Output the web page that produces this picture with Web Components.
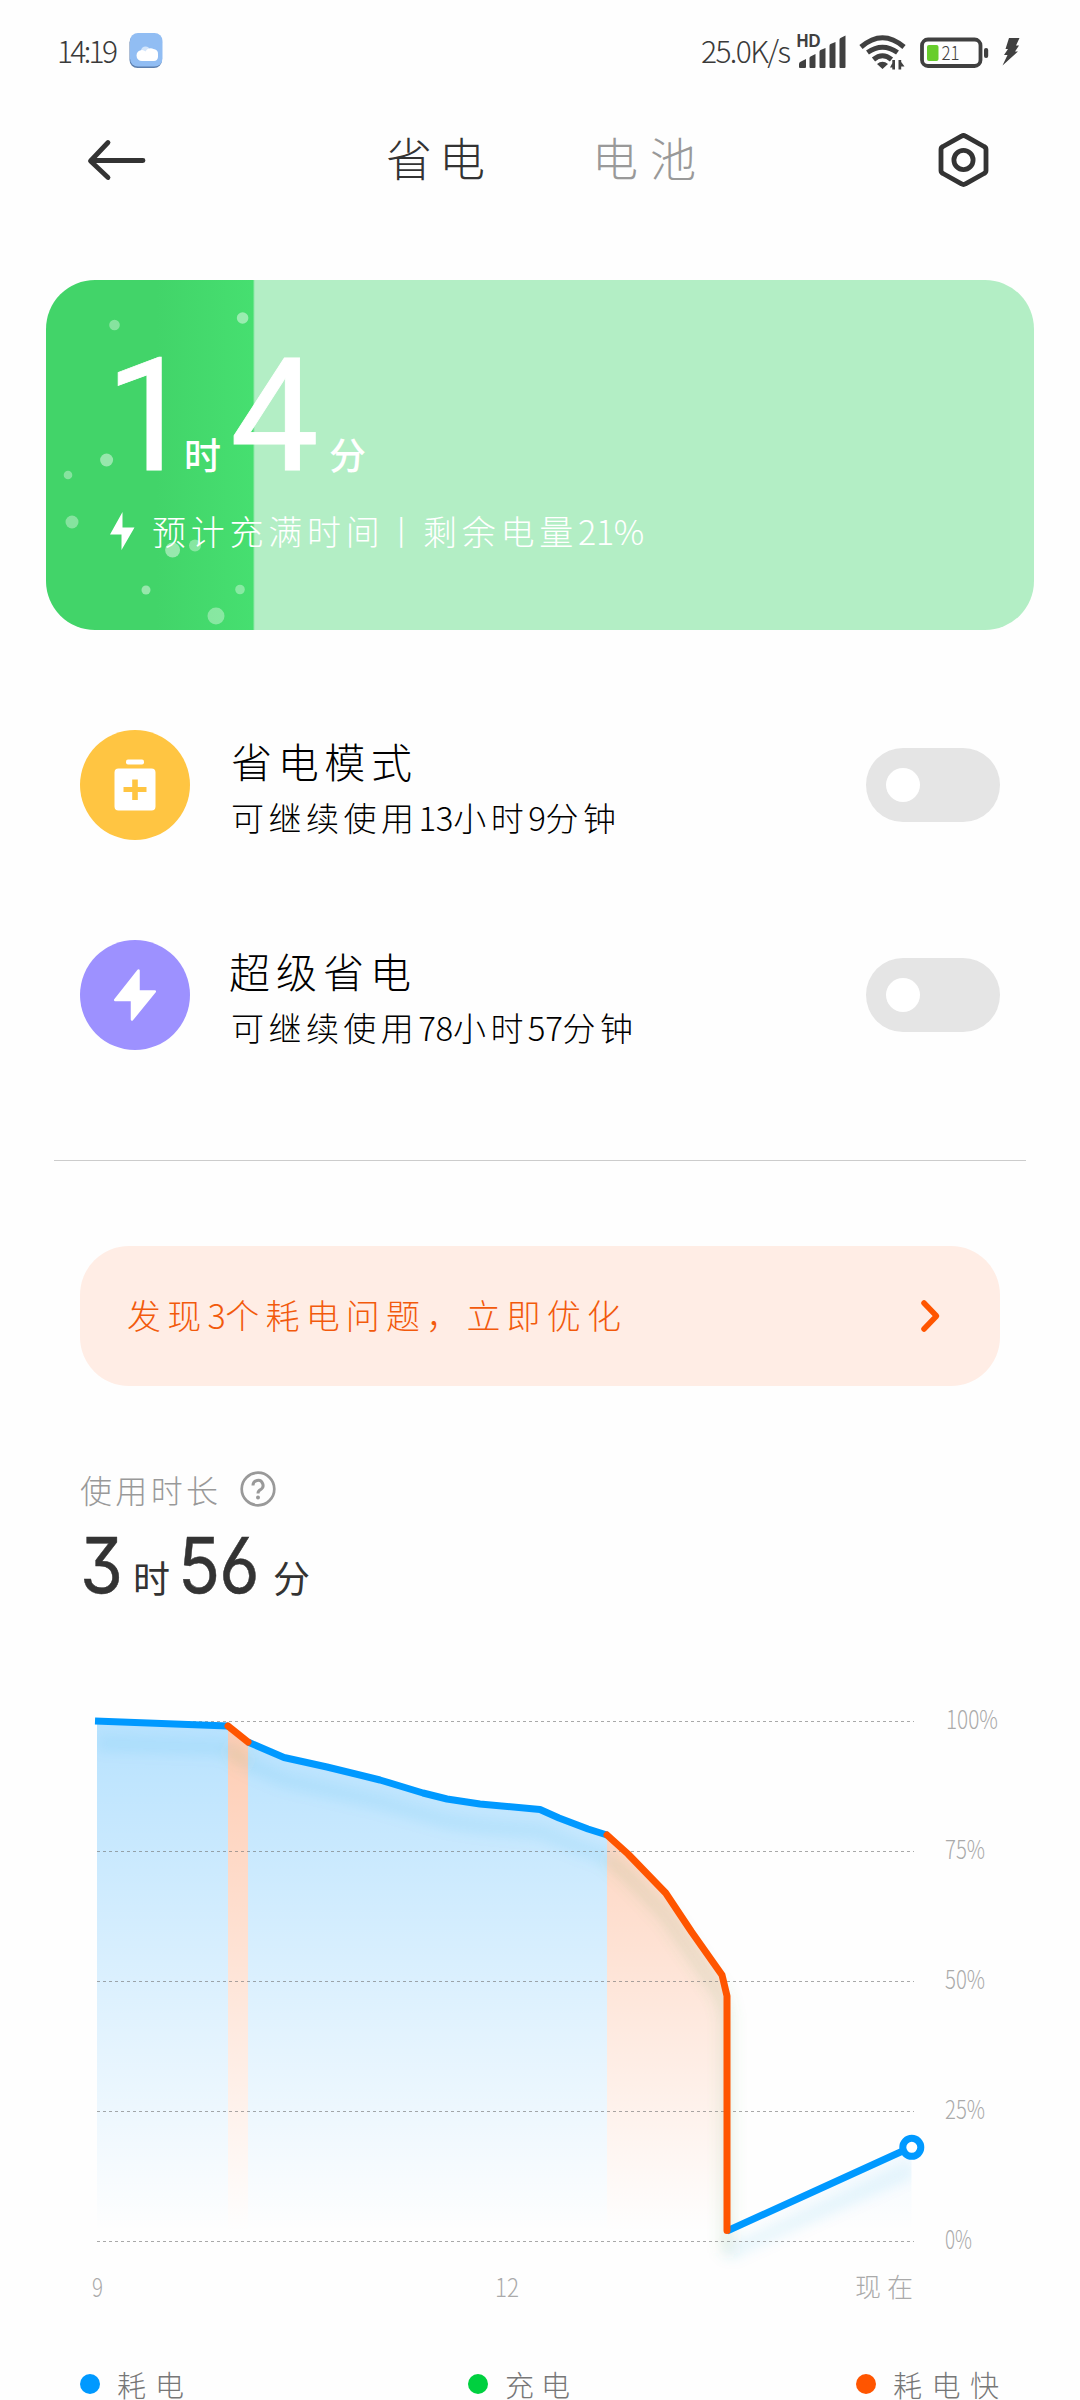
<!DOCTYPE html>
<html lang="zh-CN">
<head>
<meta charset="utf-8">
<title>省电与电池</title>
<style>
html,body{margin:0;padding:0;background:#fefefe}
body{width:1080px;height:2400px;overflow:hidden;font-family:"Noto Sans CJK SC",sans-serif;font-weight:300}
</style>
</head>
<body>
<battery-page></battery-page>
<script>
function define(name, html, after) {
  const t = document.createElement('template');
  t.innerHTML = html;
  customElements.define(name, class extends HTMLElement {
    connectedCallback() {
      if (this.shadowRoot) return;
      this.attachShadow({ mode: 'open' }).appendChild(t.content.cloneNode(true));
      if (after) after.call(this, this.shadowRoot);
    }
  });
}

// Single-line text whose tracking is adjusted so it spans the requested width.
// In mixed text only the ideographs are tracked; digits stay tight.
define('fit-text', `<style>:host{display:inline-block;white-space:nowrap;line-height:1.2}span{display:inline-block}</style><span><slot></slot></span>`, function (root) {
  const w = +this.getAttribute('w'), s = root.querySelector('span'), text = this.textContent.trim();
  const wide = text.replace(/[\x00-\x7f]/g, '').length;
  const mixed = wide > 0 && wide < text.length;
  if (mixed) this.innerHTML = text.replace(/[\x00-\x7f]+/g, m => '<span style="letter-spacing:-.3px">' + m + '</span>');
  const nat = s.getBoundingClientRect().width;
  const endsWide = text.charCodeAt(text.length - 1) > 127;
  const n = mixed ? (endsWide ? wide - 1 : wide) : text.length - 1;
  const ls = (w - nat) / Math.max(1, n);
  s.style.letterSpacing = ls + 'px';
  if (!mixed || endsWide) s.style.marginRight = -ls + 'px';
  this.style.width = w + 'px';
});

define('status-bar', `<style>
:host{display:flex;align-items:center;height:102px;padding:0 60px 0 57px;box-sizing:border-box;color:#3a3a3a}
fit-text{font-size:30px;position:relative;top:-1px}
.time{margin-right:11px}.grow{flex:1}.speed{margin-right:6px}
svg{display:block;flex:none}
</style>
<fit-text class="time" w="61">14:19</fit-text>
<svg width="34" height="36" viewBox="0 0 34 36"><rect x=".5" y="1.5" width="32.5" height="33.5" rx="8" fill="#5c7fae"/><rect x="1" y="0" width="32.5" height="33.5" rx="8" fill="#91bdf3"/><circle cx="16.500" cy="18" r="4.600" fill="#d3e5fb"/><path d="M13 28a5.500 5.500 0 0 1 0-11q2 0 3.500 1.500a6 6 0 0 1 8-2.500 4.600 4.600 0 0 1 4.500 5v3q-.5 4-4 4z" fill="#fff"/></svg>
<span class="grow"></span>
<fit-text class="speed" w="90">25.0K/s</fit-text>
<svg width="51" height="36" viewBox="0 0 51 36" fill="#404040"><text x="-.5" y="14" font-family="Liberation Sans" font-weight="700" font-size="17.500" textLength="24" lengthAdjust="spacingAndGlyphs">HD</text><path d="M2 34v-3q0-2 2-2.500l5-2.500v8q0 1-1 1H3q-1 0-1-1zM12.500 34V25q0-1 1-1.500l5-2.500v13q0 1-1 1h-4q-1 0-1-1zM22.500 34V19q0-1.500 1-2l5-2v19q0 1-1 1h-4q-1 0-1-1zM32.500 34V13q0-1.500 1-2l5-2v25q0 1-1 1h-4q-1 0-1-1zM42.500 34V7q0-1.500 1-2l5-2.500v31.500q0 1-1 1h-4q-1 0-1-1z"/></svg>
<svg style="margin-left:11px" width="48" height="38" viewBox="0 0 48 38"><g fill="none" stroke="#404040" stroke-width="5"><path d="M2 15Q23.500-3.500 45 15M8.500 20.500Q23.500 10 38.500 20.500M14.500 27.500Q23.500 20 32.500 27.500"/></g><path d="M18 32q5.500-4.500 11 0l-5.500 5zM35 28v7.500h-4zM33.300 28h2.700v9.500h-2.700zM39.500 28h2.700v9.500h-2.700zM41.500 29l4 5.500h-4z" fill="#404040"/></svg>
<svg style="margin-left:13px;margin-top:3px" width="70" height="32" viewBox="0 0 70 32"><rect x="2" y="2.500" width="58.500" height="26.500" rx="6" fill="none" stroke="#404040" stroke-width="3.800"/><rect x="7" y="8" width="11.500" height="16" rx="2" fill="#67cd2c"/><rect x="64" y="11" width="4.200" height="10" rx="2" fill="#404040"/><text x="21.500" y="23" font-size="19" fill="#404040" textLength="18" lengthAdjust="spacingAndGlyphs">21</text></svg>
<svg style="margin-left:11px;margin-top:2px" width="19" height="30" viewBox="0 0 19 30"><path d="M8 1h10.500l-3.500 7.500h3l-4 6h3L1.500 28.500l5-10.500H3L7 12H4.500z" fill="#404040"/></svg>`);

define('tab-header', `<style>
:host{display:flex;align-items:center;height:116px;padding-left:87px;color:#333}
fit-text{font-size:46px;position:relative;top:-3px}
.off{color:#999}
svg{display:block}
</style>
<svg width="60" height="44" viewBox="0 0 60 44" fill="none" stroke="#333" stroke-width="4.800" stroke-linecap="round" stroke-linejoin="round"><path d="M21 5.500L3.500 24 21 40.500M4 23.500h52" transform="translate(0 -1)"/></svg>
<fit-text style="margin-left:239px" w="99">省电</fit-text>
<fit-text style="margin-left:107px" class="off" w="104">电池</fit-text>
<svg style="margin-left:242px" width="52" height="56" viewBox="0 0 52 56" fill="none" stroke="#333" stroke-width="4.800" stroke-linejoin="round"><path d="M23.500 4.200q2-1.300 4 0L46 14.500q2 1 2 3v21q0 2-2 3L27.500 51.800q-2 1.300-4 0L5 41.500q-2-1-2-3v-21q0-2 2-3z"/><circle cx="25.500" cy="28" r="9.600"/></svg>`);

define('charge-card', `<style>
:host{display:block;position:relative;height:350px;margin:62px 46px 0;border-radius:49px;overflow:hidden;background:linear-gradient(90deg,#42d469 0,#42d469 110px,#46df70 207px,#8fe8a9 208px,#b3eec5 209px);color:#fff}
.bubbles{position:absolute;inset:0}
.body{position:relative;padding:56px 0 0 64px;box-sizing:border-box}
.big{display:flex;align-items:baseline;height:160px;line-height:160px;font-weight:500}
.n{font:400 158px/160px Roboto,sans-serif;display:block;-webkit-text-stroke:.8px #fff}
.u{font-size:37px;font-weight:500;display:block}
.sub{display:flex;align-items:center;height:50px;font-size:34px;margin-top:10px}
</style>
<svg class="bubbles" width="988" height="350" viewBox="46 280 988 350" fill="#fff"><g fill-opacity=".36"><circle cx="114.500" cy="325" r="5.300"/><circle cx="68" cy="475" r="4.300"/><circle cx="72" cy="522" r="6.500"/><circle cx="216" cy="616" r="8.500"/><circle cx="240" cy="589.500" r="4.800"/><circle cx="195" cy="545.500" r="6"/></g><g fill-opacity=".45"><circle cx="242.600" cy="318" r="5.800"/><circle cx="106.600" cy="460" r="6.500"/><circle cx="172.600" cy="550" r="7.500"/><circle cx="146" cy="590" r="4.500"/></g></svg>
<div class="body">
<div class="big"><span class="n" style="width:74px;text-indent:-5px;letter-spacing:-18px">1</span><span class="u" style="width:46px">时</span><span class="n" style="width:99px;letter-spacing:-4px">4</span><span class="u">分</span></div>
<div class="sub"><svg width="25" height="40" viewBox="0 0 25 40" fill="#fff"><path d="M12.500 1v15.500H24.500L11.500 39V23.500H0z"/></svg><fit-text style="margin-left:17px" w="492">预计充满时间丨剩余电量21%</fit-text></div>
</div>`);

define('mode-row', `<style>
:host{display:flex;align-items:center;height:110px;margin:100px 80px 0;color:#000}
.icon{width:110px;height:110px;border-radius:50%;background:var(--tint);display:grid;place-items:center}
.txt{flex:1;display:flex;flex-direction:column;padding:4px 0 0 41px}
.title{font-size:41px;line-height:48px;height:59px}
.sub{font-size:33px;line-height:44px}
.sw{width:134px;height:74px;border-radius:37px;background:#e5e5e5;display:flex;align-items:center;padding-left:20px;box-sizing:border-box}
.sw i{width:34px;height:34px;border-radius:50%;background:#fff}
</style>
<div class="icon"><slot name="icon"></slot></div>
<div class="txt"><div class="title"><slot name="title"></slot></div><div class="sub"><slot name="sub"></slot></div></div>
<div class="sw"><i></i></div>`);

define('issue-banner', `<style>
:host{display:flex;align-items:center;justify-content:space-between;height:140px;margin:85px 80px 0;padding:0 59px 0 47px;box-sizing:border-box;border-radius:49px;background:#ffede5;color:#f25a0c;font-size:34px}
svg{display:block}
div{padding-bottom:4px}
</style>
<div><slot></slot></div>
<svg width="22" height="34" viewBox="0 0 22 34" fill="none" stroke="#ff5500" stroke-width="5.500" stroke-linecap="round" stroke-linejoin="round"><path d="M5 4l12.500 13L5 30"/></svg>`);

define('usage-time', `<style>
:host{display:block;margin:83px 80px 0;color:#333}
.label{display:flex;align-items:center;height:40px;color:#999;font-size:32px}
.row{display:flex;align-items:baseline;height:110px;line-height:112px;font-weight:400}
.n{display:block;height:110px}
.n b{display:inline-block;font:400 77px/112px Inter,sans-serif;-webkit-text-stroke:.5px #333;font-feature-settings:"cv09","cv03";transform:scaleX(.9);transform-origin:0 0}
.u{display:block;font-size:37px}
</style>
<div class="label"><fit-text w="138">使用时长</fit-text>
<svg style="margin-left:21px" width="38" height="38" viewBox="0 0 38 38" fill="none" stroke="#999" stroke-width="2.700"><circle cx="19" cy="19" r="16.300"/><path d="M14 15.500a5 5 0 1 1 7.500 4.200Q19 21 19 23.500" stroke-width="3"/><circle cx="19" cy="27.500" r="2" fill="#999" stroke="none"/></svg></div>
<div class="row"><span class="n" style="width:53px"><b>3</b></span><span class="u" style="width:45px">时</span><span class="n" style="width:95px"><b style="letter-spacing:-1px">56</b></span><span class="u">分</span></div>`);

define('level-chart', `<style>
:host{display:block;margin-top:71px;height:630px}
svg{display:block}
text{font-size:26px;fill:#aaa}
.blue{stroke:#0099ff}.hot{stroke:#ff5500}
.line{fill:none;stroke-width:7;stroke-linejoin:round}
.grid{stroke:#757575;stroke-opacity:.62;stroke-width:1;stroke-dasharray:3 3}
</style>
<svg width="1080" height="630" viewBox="0 1690 1080 630">
<defs>
<linearGradient id="b" gradientUnits="userSpaceOnUse" x1="0" y1="1721" x2="0" y2="2232"><stop stop-color="#0099ff" stop-opacity=".28"/><stop offset="1" stop-color="#0099ff" stop-opacity="0"/></linearGradient>
<linearGradient id="o" gradientUnits="userSpaceOnUse" x1="0" y1="1721" x2="0" y2="2232"><stop stop-color="#ff5500" stop-opacity=".3"/><stop offset="1" stop-color="#ff5500" stop-opacity="0"/></linearGradient>
<filter id="s" filterUnits="userSpaceOnUse" x="60" y="1690" width="900" height="630"><feGaussianBlur stdDeviation="7"/></filter>
<clipPath id="c"><path d="M97 1668H911.500V2298H97z"/></clipPath>
</defs>
<path fill="url(#b)" d="M97 1721L228 1726V2241H97zM248 1742L284 1757.500 327 1767 380 1780 423 1793 447 1799 480 1804 540 1809.500 559 1818 588 1829 607 1835V2241H248zM727 2231L911.500 2147V2241H727z"/>
<path fill="url(#o)" d="M228 1726L248 1742V2241H228zM607 1835L628 1854 665.700 1893 691.500 1931.700 722 1975 727 1996V2241H607z"/>
<g clip-path="url(#c)"><g filter="url(#s)" fill="none" stroke-width="13" transform="translate(0 22)">
<path stroke="#2299dd" stroke-opacity=".1" d="M97 1721L228 1726M248 1742L284 1757.500 380 1780 447 1799 480 1804 540 1809.500 588 1829 607 1835M727 2231L911.500 2147"/>
<path stroke="#55a060" stroke-opacity=".15" d="M228 1726L248 1742M607 1835L628 1854 665.700 1893 722 1975 727 1996V2231"/></g></g>
<path class="grid" d="M97 1721.500H914M97 1851.500H914M97 1981.500H914M97 2111.500H914M97 2241.500H914"/>
<path class="line blue" d="M95 1721L228 1726M248 1742L284 1757.500 327 1767 380 1780 423 1793 447 1799 480 1804 540 1809.500 559 1818 588 1829 607 1835M727 2231L911.500 2147"/>
<path class="line hot" stroke-linecap="round" d="M228 1726L248 1742M607 1835L628 1854 665.700 1893 691.500 1931.700 722 1975 727 1996V2230.500"/>
<circle cx="911.800" cy="2147.300" r="9" fill="#fff" stroke="#0099ff" stroke-width="7"/>
<text x="946" y="1728.500" textLength="52" lengthAdjust="spacingAndGlyphs">100%</text>
<text x="945" y="1858.500" textLength="40" lengthAdjust="spacingAndGlyphs">75%</text>
<text x="945" y="1988.500" textLength="40" lengthAdjust="spacingAndGlyphs">50%</text>
<text x="945" y="2118.500" textLength="40" lengthAdjust="spacingAndGlyphs">25%</text>
<text x="945" y="2248.500" textLength="27" lengthAdjust="spacingAndGlyphs">0%</text>
<text x="92" y="2296.500" textLength="11" lengthAdjust="spacingAndGlyphs">9</text>
<text x="495" y="2296.500" textLength="24" lengthAdjust="spacingAndGlyphs">12</text>
<text x="855" y="2296.500" textLength="58">现在</text>
</svg>`);

define('legend-item', `<style>
:host{display:flex;align-items:center;gap:17px;height:30px;line-height:28px;color:#777;font-size:29px}
i{width:20px;height:20px;border-radius:50%;background:var(--dot)}
::slotted(fit-text){line-height:28px;height:28px}
</style><i></i><slot></slot>`);

define('battery-page', `<style>
:host{display:flex;flex-direction:column;width:1080px;height:2400px;overflow:hidden;background:#fefefe}
:host>*{flex-shrink:0}
hr{border:0;height:1px;background:#ccc;margin:110px 54px 0;width:972px}
.legend{display:flex;justify-content:space-between;margin:49px 81px 0 80px;height:30px;align-items:center}
</style>
<status-bar></status-bar>
<tab-header></tab-header>
<charge-card></charge-card>
<mode-row style="--tint:#ffc542"><svg slot="icon" width="44" height="54" viewBox="0 0 44 54" fill="#fff"><rect x="13" y="1.500" width="18" height="5" rx="2"/><path fill-rule="evenodd" d="M5.500 10.500h33q4 0 4 4v34q0 4-4 4h-33q-4 0-4-4v-34q0-4 4-4zM19.200 21.500v7.500h-8.700v5h8.700v8h5.600v-8h8.700v-5h-8.700v-7.500z"/></svg>
<fit-text slot="title" w="181">省电模式</fit-text><fit-text slot="sub" w="385">可继续使用13小时9分钟</fit-text></mode-row>
<mode-row style="--tint:#9d91ff"><svg slot="icon" width="44" height="54" viewBox="0 0 44 54"><path fill="#fff" stroke="#fff" stroke-width="2.500" stroke-linejoin="round" d="M25.500 2.500V23.500H41.800L19 51.500V32H2.200z"/></svg>
<fit-text slot="title" w="182" style="margin-left:-2px">超级省电</fit-text><fit-text slot="sub" w="402">可继续使用78小时57分钟</fit-text></mode-row>
<hr>
<issue-banner><fit-text w="494">发现3个耗电问题，立即优化</fit-text></issue-banner>
<usage-time></usage-time>
<level-chart></level-chart>
<div class="legend">
<legend-item style="--dot:#0099ff"><fit-text w="67">耗电</fit-text></legend-item>
<legend-item style="--dot:#00d03f;margin-left:-2px"><fit-text w="65">充电</fit-text></legend-item>
<legend-item style="--dot:#ff5500"><fit-text w="106">耗电快</fit-text></legend-item>
</div>`);
</script>
</body>
</html>
